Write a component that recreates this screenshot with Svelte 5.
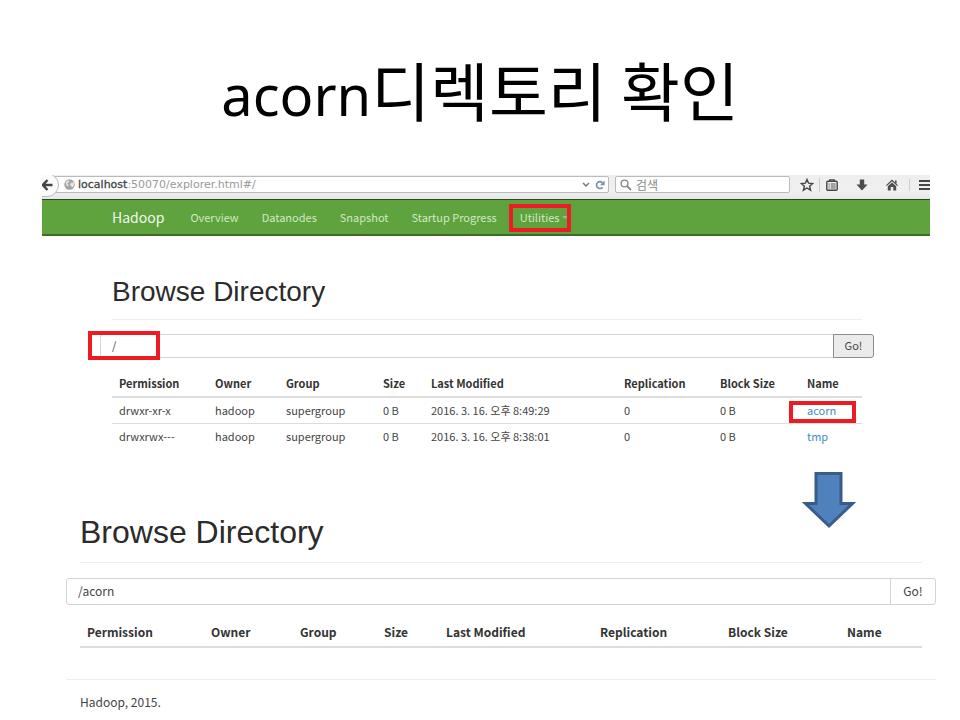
<script>
  const columns = ['Permission', 'Owner', 'Group', 'Size', 'Last Modified', 'Replication', 'Block Size', 'Name'];
  const rootWidths = [96, 71, 97, 48, 193, 96, 87, 62];
  const acornWidths = [124, 89, 84, 62, 154, 128, 119, 82];
  const rows = [
    ['drwxr-xr-x', 'hadoop', 'supergroup', '0 B', '2016. 3. 16. 오후 8:49:29', '0', '0 B', 'acorn'],
    ['drwxrwx---', 'hadoop', 'supergroup', '0 B', '2016. 3. 16. 오후 8:38:01', '0', '0 B', 'tmp']
  ];
  const links = ['Overview', 'Datanodes', 'Snapshot', 'Startup Progress'];
  const share = (list, i) => (list[i] / list.reduce((a, b) => a + b, 0)) * 100;
  let rootPath = $state('/');
  let acornPath = $state('/acorn');
</script>

<main class="slide">
  <h1><span class="latin">acorn</span>디렉토리 확인</h1>

  <section class="browser">
    <div class="toolbar">
      <button class="back" aria-label="Back">
        <svg width="12" height="12" viewBox="0 0 12 12"><path d="M6.5 1 1.8 6l4.7 5M2 6h9.5" fill="none" stroke="#444" stroke-width="2.4" /></svg>
      </button>
      <div class="address">
        <svg width="11" height="11" viewBox="0 0 11 11">
          <circle cx="5.5" cy="5.5" r="5.2" fill="#a2a2a2" />
          <path d="M1.5 3.2 4 1.2l1.6.8-1 1.6L3 4.4l1.6 1.2-.4 2.2L2.6 6.4zM6.8 4l2.4-1 1 2.2-1.4 3-1.6-.8L6 5.6z" fill="#e6e6e6" />
        </svg>
        <span class="url"><b>localhost</b>:50070/explorer.html#/</span>
        <svg width="8" height="6" viewBox="0 0 8 6"><path d="m1 1 3 3 3-3" fill="none" stroke="#777" stroke-width="1.5" /></svg>
        <svg width="10" height="10" viewBox="0 0 10 10"><path d="M7.6 7.2A3.4 3.4 0 1 1 7.4 2.8" fill="none" stroke="#7b8fa5" stroke-width="1.7" /><path d="M9.6.6v4.6H5z" fill="#7b8fa5" /></svg>
      </div>
      <label class="search">
        <svg width="12" height="12" viewBox="0 0 12 12"><circle cx="4.5" cy="4.5" r="3.4" fill="none" stroke="#888" stroke-width="1.4" /><path d="m7 7 4 4" stroke="#888" stroke-width="1.8" /></svg>
        <input type="text" placeholder="검색" aria-label="검색" />
      </label>
      <div class="tools">
        <button aria-label="Bookmark"><svg width="14" height="14" viewBox="0 0 14 14"><path d="m7 1.4 1.6 3.8 4.1.3-3.1 2.7 1 4L7 10l-3.6 2.2 1-4-3.1-2.7 4.1-.3z" fill="none" stroke="#444" stroke-width="1.4" /></svg></button>
        <i></i>
        <button aria-label="Bookmarks list"><svg width="14" height="14" viewBox="0 0 14 14"><path d="M4.8 3V1.8h4.4V3" fill="none" stroke="#444" stroke-width="1.3" /><rect x="1.8" y="3.2" width="10.4" height="9" rx="1" fill="none" stroke="#444" stroke-width="1.4" /><path d="M3.5 6h1.2m1 0h5M3.5 8h1.2m1 0h5M3.5 10h1.2m1 0h5" stroke="#555" /></svg></button>
        <button aria-label="Downloads"><svg width="14" height="14" viewBox="0 0 14 14"><path d="M4.8 1.500h4.400v5h3.300L7 12.500 1.500 6.500h3.300z" fill="#4c4c4c" /></svg></button>
        <button aria-label="Home"><svg width="14" height="14" viewBox="0 0 14 14"><path d="M7 1.600 13 7.300l-.8.8L7 3.300 1.800 8.100 1 7.300z" fill="#4c4c4c" /><path d="M10 2.600h1.600v3.200L10 4.400zM7 4.400l4.200 3.800v4.200H8.300V9H5.700v3.400H2.800V8.200z" fill="#4c4c4c" /></svg></button>
      </div>
      <button class="menu" aria-label="Menu"><svg width="11" height="12" viewBox="0 0 11 12"><path d="M0 2h11M0 6h11M0 10h11" stroke="#444" stroke-width="2" /></svg></button>
    </div>

    <nav>
      <a class="brand" href="#home">Hadoop</a>
      {#each links as link}
        <a href="#{link}">{link}</a>
      {/each}
      <a class="utilities" href="#utilities">Utilities<span class="caret"></span><span class="mark"></span></a>
    </nav>

    <div class="page root">
      <h2>Browse Directory</h2>
      <form class="path" onsubmit={(e) => e.preventDefault()}>
        <input type="text" aria-label="Directory" bind:value={rootPath} />
        <button>Go!</button>
        <span class="mark"></span>
      </form>
      <table>
        <thead>
          <tr>
            {#each columns as column, i}
              <th style="width: {share(rootWidths, i)}%">{column}</th>
            {/each}
          </tr>
        </thead>
        <tbody>
          {#each rows as row}
            <tr>
              {#each row as cell, i}
                {#if i === 7}
                  <td><a class="name" href="#/{cell}">{cell}{#if cell === 'acorn'}<span class="mark"></span>{/if}</a></td>
                {:else}
                  <td>{cell}</td>
                {/if}
              {/each}
            </tr>
          {/each}
        </tbody>
      </table>
      <svg class="arrow" width="54" height="58" viewBox="0 0 54 58"><path d="M14 2.500h25v30h11.500L27 55 3.500 32.500H14z" fill="#4f81bd" stroke="#385d8a" stroke-width="3" /></svg>
    </div>
  </section>

  <section class="page acorn">
    <h2>Browse Directory</h2>
    <form class="path" onsubmit={(e) => e.preventDefault()}>
      <input type="text" aria-label="Directory" bind:value={acornPath} />
      <button>Go!</button>
    </form>
    <table>
      <thead>
        <tr>
          {#each columns as column, i}
            <th style="width: {share(acornWidths, i)}%">{column}</th>
          {/each}
        </tr>
      </thead>
    </table>
    <footer>Hadoop, 2015.</footer>
  </section>
</main>

<style>
  :global(body) {
    margin: 0;
    background: #fff;
  }
  .slide {
    color: #444;
    font: 11px/16px 'Noto Sans CJK KR', 'Noto Sans', sans-serif;
  }
  .slide * {
    box-sizing: border-box;
  }
  h1 {
    margin: 0;
    padding: 40px 0 39px;
    color: #000;
    font-size: 64px;
    font-weight: 400;
    line-height: 96px;
    text-align: center;
  }
  .latin {
    font-family: 'Noto Sans', sans-serif;
    font-size: 56px;
    line-height: 56px;
  }
  button,
  input {
    margin: 0;
    padding: 0;
    border: 0;
    background: none;
    color: inherit;
    font: inherit;
  }
  svg {
    display: block;
    flex: none;
  }
  a {
    color: inherit;
    text-decoration: none;
  }
  .browser {
    margin: 0 30px 0 42px;
  }
  .toolbar {
    display: flex;
    align-items: center;
    height: 24px;
    padding-bottom: 5px;
    overflow: hidden;
    background: linear-gradient(#eee, #f0f0f0 70%, #e6e6e6);
  }
  .back {
    position: relative;
    display: flex;
    flex: none;
    align-items: center;
    justify-content: flex-end;
    width: 28px;
    height: 24px;
    margin-left: -11px;
    padding-right: 5px;
    border: 1px solid #b5bcc4;
    border-radius: 12px;
    background: #fbfbfb;
  }
  .address,
  .search {
    display: flex;
    align-items: center;
    height: 17px;
    border: 1px solid #bbb;
    border-radius: 2px;
    background: #fff;
  }
  .address {
    flex: 1;
    gap: 5px;
    margin-left: -8px;
    padding: 0 3px 0 12px;
  }
  .url {
    flex: 1;
    margin-left: -2px;
    color: #999;
    font: 11px/15px 'DejaVu Sans', sans-serif;
  }
  .url b {
    color: #444;
    font-weight: 400;
    -webkit-text-stroke: 0.3px #444;
  }
  .search {
    gap: 4px;
    width: 175px;
    margin-left: 6px;
    padding-left: 4px;
  }
  .search input {
    width: 100%;
    min-width: 0;
    font-size: 12px;
  }
  .search input::placeholder {
    color: #888;
    opacity: 1;
  }
  .tools {
    display: flex;
    align-items: center;
    gap: 16px;
    padding: 0 10px;
  }
  .tools i {
    width: 1px;
    height: 14px;
    margin: 0 -11px;
    background: #ccc;
  }
  .menu {
    padding-left: 9px;
    border-left: 1px solid #c8d0d8;
  }
  nav {
    display: flex;
    align-items: center;
    gap: 23px;
    height: 37px;
    padding-left: 70px;
    border-top: 1px solid #2c4a20;
    border-bottom: 2px solid #3d6b28;
    background: #5fa33e;
    color: #d2e8c6;
  }
  .brand {
    margin-right: 3px;
    color: #f2f8ee;
    font-size: 14px;
  }
  .utilities {
    position: relative;
  }
  .caret {
    position: absolute;
    top: 7px;
    left: 42px;
    border: 3px solid transparent;
    border-top-color: #aaa;
  }
  .mark {
    position: absolute;
    border: 4px solid #ed1c24;
    pointer-events: none;
  }
  .utilities .mark {
    top: -5px;
    left: -11px;
    width: 62px;
    height: 28px;
  }
  .page h2 {
    margin: 0;
    border-bottom: 1px solid #eee;
    color: #2b2b2b;
    font-family: 'Liberation Sans', sans-serif;
    font-weight: 400;
  }
  .root {
    position: relative;
    padding: 36px 68px 0 70px;
  }
  .root h2 {
    padding: 4px 0 11px;
    font-size: 28px;
    line-height: 32px;
  }
  .path {
    position: relative;
    display: flex;
    height: 24px;
    margin: 14px -12px 0;
  }
  .path input {
    flex: 1;
    min-width: 0;
    padding: 0 11px 2px;
    border: 1px solid #d4d4d4;
    border-radius: 3px 0 0 3px;
  }
  .path button {
    width: 41px;
    margin-left: -1px;
    padding-bottom: 2px;
    border: 1px solid #8c8c8c;
    border-radius: 0 3px 3px 0;
    background: #ebebeb;
  }
  .path .mark {
    top: -3px;
    left: -12px;
    width: 72px;
    height: 29px;
  }
  table {
    width: 100%;
    border-collapse: collapse;
    table-layout: fixed;
  }
  th,
  td {
    padding: 0 0 0 7px;
    text-align: left;
    white-space: nowrap;
  }
  th {
    border-bottom: 2px solid #ddd;
    color: #333;
    font-weight: 700;
  }
  td {
    height: 26px;
  }
  tbody tr + tr td {
    border-top: 1px solid #ddd;
  }
  .root table {
    margin-top: 12px;
  }
  .root th {
    height: 27px;
  }
  .name {
    position: relative;
    color: #428bca;
  }
  .name .mark {
    top: -1px;
    left: -18px;
    width: 67px;
    height: 22px;
  }
  .arrow {
    position: absolute;
    right: 74px;
    bottom: -80px;
  }
  .acorn {
    padding: 66px 38px 0 80px;
    font-size: 12px;
  }
  .acorn h2 {
    padding: 0 0 13px;
    font-size: 32px;
    line-height: 34px;
  }
  .acorn .path {
    height: 27px;
    margin: 15px -14px 0;
  }
  .acorn .path button {
    width: 46px;
    border-color: #d4d4d4;
    background: #fff;
  }
  .acorn table {
    margin-top: 13px;
  }
  .acorn th {
    height: 29px;
  }
  footer {
    margin: 31px -14px 0;
    padding: 14px 14px 0;
    border-top: 1px solid #eee;
  }
</style>
